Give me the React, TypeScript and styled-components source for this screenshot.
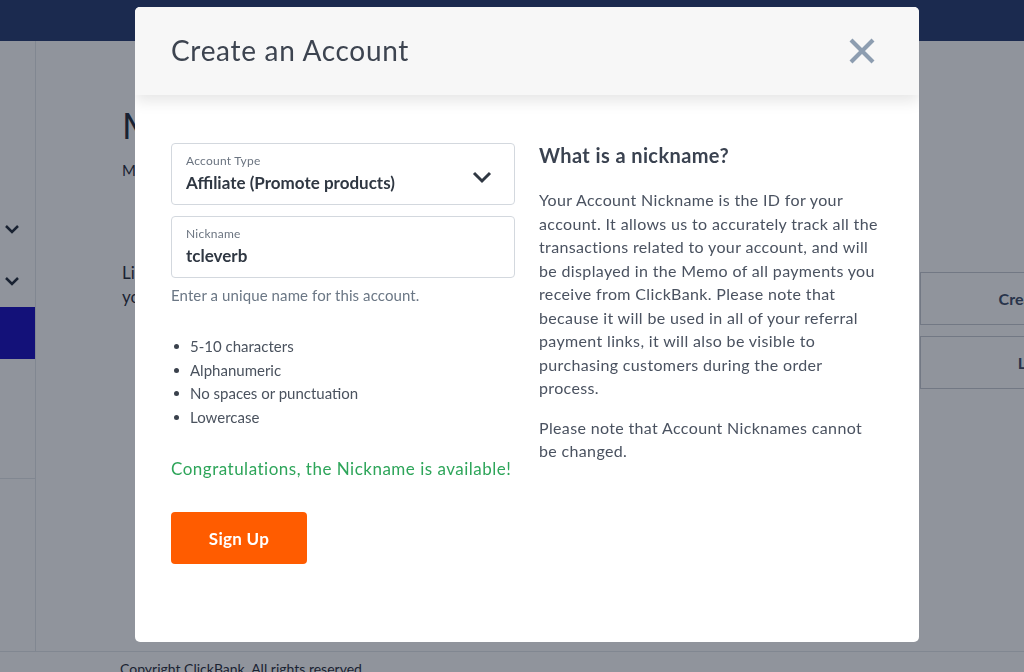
import React from 'react';
import styled, { createGlobalStyle } from 'styled-components';

const GlobalStyle = createGlobalStyle`
  html, body {
    margin: 0;
    padding: 0;
    height: 100%;
    overflow: hidden;
  }
  body {
    font-family: Lato, 'Liberation Sans', sans-serif;
    background: #ffffff;
  }
`;

const Page = styled.div`
  width: 1024px;
  height: 672px;
  display: flex;
  flex-direction: column;
  background: #fff;
  overflow: hidden;
`;

const NavBar = styled.div`
  height: 41px;
  flex-shrink: 0;
  background: #23386f;
`;

const Body = styled.div`
  display: flex;
  height: 610px;
  flex-shrink: 0;
  border-bottom: 1px solid #e3e6ea;
`;

const Sidebar = styled.div`
  width: 35px;
  flex-shrink: 0;
  border-right: 1px solid #e3e6ea;
  display: flex;
  flex-direction: column;
  padding-top: 162px;
`;

const SideItem = styled.div<{ $active?: boolean }>`
  height: 52px;
  display: flex;
  align-items: center;
  padding-left: 4px;
  background: ${(p) => (p.$active ? '#1409be' : 'transparent')};
  color: #1f2937;
`;

const SideDivider = styled.div`
  margin-top: 119px;
  border-top: 1px solid #e3e6ea;
`;

const Main = styled.div`
  flex: 1;
  padding: 62px 0 0 86px;
  display: flex;
  flex-direction: column;
  color: #1f2937;
`;

const MainTitle = styled.h1`
  margin: 0;
  font-size: 36px;
  font-weight: 400;
  line-height: 44px;
`;

const MainSub = styled.p`
  margin: 14px 0 0;
  font-size: 15px;
`;

const MainRow = styled.div`
  display: flex;
  align-items: flex-start;
  margin-top: 82px;
`;

const MainText = styled.p`
  margin: 0;
  width: 798px;
  flex-shrink: 0;
  font-size: 17px;
  line-height: 24px;
`;

const MainActions = styled.div`
  display: flex;
  flex-direction: column;
  gap: 11px;
  margin-top: 11px;
`;

const OutlineButton = styled.div`
  width: 286px;
  height: 51px;
  border: 1px solid #c6cbd2;
  display: flex;
  align-items: center;
  justify-content: center;
  font-size: 16px;
  font-weight: 700;
  color: #3b4a66;
  white-space: nowrap;
`;

const Footer = styled.div`
  padding: 8px 0 0 120px;
  font-size: 14px;
  color: #1f2937;
`;

const Overlay = styled.div`
  position: fixed;
  inset: 0;
  background: rgba(20, 28, 45, 0.47);
  display: flex;
  align-items: flex-start;
  padding: 7px 0 0 135px;
`;

const Modal = styled.div`
  width: 784px;
  height: 635px;
  background: #fff;
  border-radius: 5px;
  display: flex;
  flex-direction: column;
  overflow: hidden;
`;

const ModalHeader = styled.div`
  height: 88px;
  flex-shrink: 0;
  background: #f7f7f7;
  display: flex;
  align-items: center;
  justify-content: space-between;
  padding: 0 43px 0 36px;
  box-shadow: 0 6px 14px rgba(0, 0, 0, 0.1);
  position: relative;
  z-index: 1;
`;

const ModalTitle = styled.h2`
  margin: 0;
  font-size: 28px;
  font-weight: 400;
  letter-spacing: 0.7px;
  color: #3d4450;
  padding-bottom: 2px;
`;

const CloseButton = styled.button`
  border: none;
  background: none;
  padding: 0;
  width: 28px;
  height: 28px;
  display: flex;
  align-items: center;
  justify-content: center;
  cursor: pointer;
`;

const ModalBody = styled.div`
  display: grid;
  grid-template-columns: 344px 344px;
  gap: 24px;
  padding: 48px 36px 0;
`;

const Column = styled.div`
  display: flex;
  flex-direction: column;
`;

const Field = styled.div`
  height: 62px;
  box-sizing: border-box;
  border: 1px solid #d3d8de;
  border-radius: 4px;
  padding: 9px 22px 0 14px;
  display: flex;
  align-items: flex-start;
  justify-content: space-between;
  & + & {
    margin-top: 11px;
  }
`;

const FieldInner = styled.div`
  display: flex;
  flex-direction: column;
`;

const FieldLabel = styled.span`
  font-size: 12px;
  line-height: 16px;
  letter-spacing: 0.25px;
  color: #6b7480;
`;

const FieldValue = styled.span`
  margin-top: 2px;
  font-size: 17px;
  line-height: 24px;
  font-weight: 700;
  color: #2f3742;
`;

const Chevron = styled.svg`
  margin-top: 17px;
`;

const HelpText = styled.p`
  margin: 7px 0 0;
  font-size: 15px;
  line-height: 20px;
  letter-spacing: 0.1px;
  color: #6b7785;
`;

const Rules = styled.ul`
  list-style: none;
  margin: 30px 0 0;
  padding: 0;
`;

const Rule = styled.li`
  display: flex;
  align-items: center;
  gap: 11px;
  font-size: 15px;
  line-height: 23.5px;
  color: #4a525e;
  padding-left: 3px;
  &::before {
    content: '';
    width: 5px;
    height: 5px;
    border-radius: 50%;
    background: #3a414c;
  }
`;

const Success = styled.p`
  margin: 29px 0 0;
  font-size: 17px;
  line-height: 22px;
  letter-spacing: 0.5px;
  color: #2ea55a;
  white-space: nowrap;
`;

const SignUp = styled.button`
  margin-top: 32px;
  width: 136px;
  height: 52px;
  border: none;
  border-radius: 4px;
  background: #ff5c00;
  color: #fff;
  font-family: inherit;
  font-size: 17px;
  font-weight: 700;
  letter-spacing: 0.3px;
  cursor: pointer;
`;

const InfoTitle = styled.h3`
  margin: 0;
  font-size: 20px;
  line-height: 24px;
  font-weight: 700;
  letter-spacing: 0.4px;
  color: #3a4250;
`;

const InfoText = styled.p`
  margin: 21px 0 0;
  font-size: 16px;
  line-height: 23.5px;
  letter-spacing: 0.35px;
  color: #4a5260;
  & + & {
    margin-top: 16px;
  }
`;

const SmallChevron = () => (
  <svg width="16" height="10" viewBox="0 0 16 10">
    <polyline points="2,2 8,8 14,2" fill="none" stroke="#1f2937" strokeWidth="2.5" />
  </svg>
);

export default function App() {
  return (
    <>
      <GlobalStyle />
      <Page>
        <NavBar />
        <Body>
          <Sidebar>
            <SideItem><SmallChevron /></SideItem>
            <SideItem><SmallChevron /></SideItem>
            <SideItem $active />
            <SideDivider />
          </Sidebar>
          <Main>
            <MainTitle>My Accounts</MainTitle>
            <MainSub>Manage your ClickBank accounts</MainSub>
            <MainRow>
              <MainText>
                List of all accounts linked to
                <br />
                your profile
              </MainText>
              <MainActions>
                <OutlineButton>Create an Account</OutlineButton>
                <OutlineButton>Link Account</OutlineButton>
              </MainActions>
            </MainRow>
          </Main>
        </Body>
        <Footer>Copyright ClickBank. All rights reserved.</Footer>
      </Page>
      <Overlay>
        <Modal>
          <ModalHeader>
            <ModalTitle>Create an Account</ModalTitle>
            <CloseButton aria-label="Close">
              <svg width="28" height="26" viewBox="0 0 28 26">
                <path d="M3 2 L25 24 M25 2 L3 24" stroke="#8d9db0" strokeWidth="4.2" fill="none" />
              </svg>
            </CloseButton>
          </ModalHeader>
          <ModalBody>
            <Column>
              <Field>
                <FieldInner>
                  <FieldLabel>Account Type</FieldLabel>
                  <FieldValue>Affiliate (Promote products)</FieldValue>
                </FieldInner>
                <Chevron width="20" height="14" viewBox="0 0 20 14">
                  <polyline points="2,3 10,11 18,3" fill="none" stroke="#2f3742" strokeWidth="3" />
                </Chevron>
              </Field>
              <Field>
                <FieldInner>
                  <FieldLabel>Nickname</FieldLabel>
                  <FieldValue>tcleverb</FieldValue>
                </FieldInner>
              </Field>
              <HelpText>Enter a unique name for this account.</HelpText>
              <Rules>
                <Rule>5-10 characters</Rule>
                <Rule>Alphanumeric</Rule>
                <Rule>No spaces or punctuation</Rule>
                <Rule>Lowercase</Rule>
              </Rules>
              <Success>Congratulations, the Nickname is available!</Success>
              <div>
                <SignUp>Sign Up</SignUp>
              </div>
            </Column>
            <Column>
              <InfoTitle>What is a nickname?</InfoTitle>
              <InfoText>
                Your Account Nickname is the ID for your account. It allows us to accurately track all the
                transactions related to your account, and will be displayed in the Memo of all payments you
                receive from ClickBank. Please note that because it will be used in all of your referral
                payment links, it will also be visible to purchasing customers during the order process.
              </InfoText>
              <InfoText>Please note that Account Nicknames cannot be changed.</InfoText>
            </Column>
          </ModalBody>
        </Modal>
      </Overlay>
    </>
  );
}
